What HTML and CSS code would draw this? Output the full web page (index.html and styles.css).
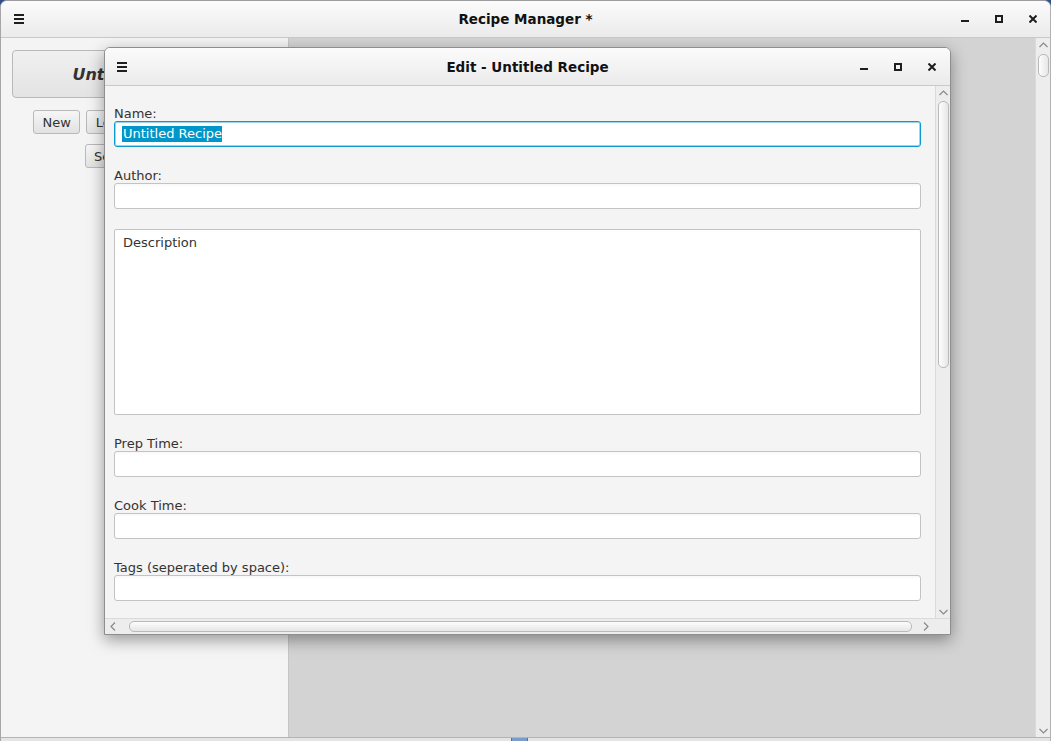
FILE: index.html
```html
<!DOCTYPE html>
<html>
<head>
<meta charset="utf-8">
<title>Recipe Manager</title>
<link rel="stylesheet" href="styles.css">
</head>
<body>
<div class="app">
  <header class="titlebar main-titlebar">
    <div class="tb-left">
      <svg class="hamburger" width="10" height="10" viewBox="0 0 10 10"><rect x="0" y="0" width="10" height="2"/><rect x="0" y="4" width="10" height="2"/><rect x="0" y="8" width="10" height="2"/></svg>
    </div>
    <div class="tb-title">Recipe Manager *</div>
    <div class="tb-controls">
      <span class="ctl"><svg width="8" height="8" viewBox="0 0 8 8"><rect x="0" y="5" width="8" height="2"/></svg></span>
      <span class="ctl"><svg width="8" height="8" viewBox="0 0 8 8"><rect x="1" y="1" width="6" height="6" fill="none" stroke="#1e1e1e" stroke-width="2"/></svg></span>
      <span class="ctl"><svg width="8" height="8" viewBox="0 0 8 8"><path d="M0.5 0.5 L7.5 7.5 M7.5 0.5 L0.5 7.5" stroke="#1e1e1e" stroke-width="2" fill="none"/></svg></span>
    </div>
  </header>

  <div class="main-body">
    <aside class="sidebar">
      <div class="recipe-btn">Untitled Recipe</div>
      <div class="btn-row">
        <div class="btn">New</div>
        <div class="btn">Load</div>
        <div class="btn">Save</div>
        <div class="btn">Delete</div>
      </div>
      <div class="btn-row">
        <div class="btn">Search</div>
        <div class="btn">Filter</div>
      </div>
    </aside>
    <main class="workspace"></main>
    <div class="vscroll main-vscroll">
      <svg class="arrow" width="9" height="6" viewBox="0 0 9 6"><polyline points="0.5,5 4.5,1 8.5,5" fill="none" stroke="#8a8a8a" stroke-width="1.2"/></svg>
      <div class="vthumb main-thumb"></div>
      <div class="vfill"></div>
      <svg class="arrow" width="9" height="6" viewBox="0 0 9 6"><polyline points="0.5,1 4.5,5 8.5,1" fill="none" stroke="#8a8a8a" stroke-width="1.2"/></svg>
    </div>
  </div>

  <div class="bottom-edge"><div class="task-item"></div></div>

  <section class="dialog">
    <header class="titlebar dialog-titlebar">
      <div class="tb-left">
        <svg class="hamburger" width="10" height="10" viewBox="0 0 10 10"><rect x="0" y="0" width="10" height="2"/><rect x="0" y="4" width="10" height="2"/><rect x="0" y="8" width="10" height="2"/></svg>
      </div>
      <div class="tb-title">Edit - Untitled Recipe</div>
      <div class="tb-controls">
        <span class="ctl"><svg width="8" height="8" viewBox="0 0 8 8"><rect x="0" y="5" width="8" height="2"/></svg></span>
        <span class="ctl"><svg width="8" height="8" viewBox="0 0 8 8"><rect x="1" y="1" width="6" height="6" fill="none" stroke="#1e1e1e" stroke-width="2"/></svg></span>
        <span class="ctl"><svg width="8" height="8" viewBox="0 0 8 8"><path d="M0.5 0.5 L7.5 7.5 M7.5 0.5 L0.5 7.5" stroke="#1e1e1e" stroke-width="2" fill="none"/></svg></span>
      </div>
    </header>

    <div class="dialog-scroll">
      <div class="form">
        <div class="field">
          <div class="label">Name:</div>
          <div class="textfield focused"><span class="selection">Untitled Recipe</span></div>
        </div>
        <div class="field">
          <div class="label">Author:</div>
          <div class="textfield"></div>
        </div>
        <div class="field">
          <div class="textarea">Description</div>
        </div>
        <div class="field">
          <div class="label">Prep Time:</div>
          <div class="textfield"></div>
        </div>
        <div class="field">
          <div class="label">Cook Time:</div>
          <div class="textfield"></div>
        </div>
        <div class="field">
          <div class="label">Tags (seperated by space):</div>
          <div class="textfield"></div>
        </div>
      </div>
      <div class="vscroll dialog-vscroll">
        <svg class="arrow" width="9" height="6" viewBox="0 0 9 6"><polyline points="0.5,5 4.5,1 8.5,5" fill="none" stroke="#8a8a8a" stroke-width="1.2"/></svg>
        <div class="vthumb dialog-thumb"></div>
        <div class="vfill"></div>
        <svg class="arrow" width="9" height="6" viewBox="0 0 9 6"><polyline points="0.5,1 4.5,5 8.5,1" fill="none" stroke="#8a8a8a" stroke-width="1.2"/></svg>
      </div>
    </div>

    <div class="hscroll-row">
      <div class="hscroll">
        <svg class="harrow" width="6" height="9" viewBox="0 0 6 9"><polyline points="5,0.5 1,4.5 5,8.5" fill="none" stroke="#8a8a8a" stroke-width="1.2"/></svg>
        <div class="hthumb"></div>
        <svg class="harrow" width="6" height="9" viewBox="0 0 6 9"><polyline points="1,0.5 5,4.5 1,8.5" fill="none" stroke="#8a8a8a" stroke-width="1.2"/></svg>
      </div>
      <div class="corner"></div>
    </div>
  </section>
</div>
</body>
</html>
```

FILE: styles.css
```css
* { box-sizing: border-box; }

html, body {
  margin: 0;
  padding: 0;
  width: 1051px;
  height: 741px;
  overflow: hidden;
  background: #2c4f86;
  font-family: "DejaVu Sans", "Liberation Sans", sans-serif;
  font-size: 13px;
  color: #333333;
}

.app {
  position: relative;
  width: 1051px;
  height: 741px;
  display: flex;
  flex-direction: column;
  background: #f4f4f4;
  border-top: 1px solid #9c9c9c;
  border-left: 1px solid #a6a6a6;
  border-right: 1px solid #b2b2b2;
  border-radius: 7px 7px 0 0;
  overflow: hidden;
}

/* ---------- title bars ---------- */
.titlebar {
  display: grid;
  grid-template-columns: 1fr auto 1fr;
  align-items: center;
  background: linear-gradient(#fbfbfb, #ebebeb);
  border-bottom: 1px solid #c9c9c9;
  flex: none;
}

.main-titlebar { height: 37px; }

.tb-left {
  display: flex;
  align-items: center;
}

.main-titlebar .tb-left { padding-left: 13px; }

.hamburger { display: block; fill: #1e1e1e; }

.tb-title {
  font-weight: bold;
  font-size: 13.5px;
  color: #111111;
  white-space: nowrap;
}

.tb-controls {
  display: flex;
  justify-content: flex-end;
}

.ctl {
  width: 34px;
  height: 20px;
  display: flex;
  align-items: center;
  justify-content: center;
}

.ctl svg { display: block; fill: #1e1e1e; }

/* ---------- main window body ---------- */
.main-body {
  flex: 1;
  display: flex;
  min-height: 0;
}

.sidebar {
  width: 288px;
  flex: none;
  background: #f4f4f4;
  border-right: 1px solid #c6c6c6;
  padding: 12px 12px 0 11px;
  display: flex;
  flex-direction: column;
}

.recipe-btn {
  height: 48px;
  border: 1px solid #b9b9b9;
  border-radius: 4px;
  background: linear-gradient(#f0f0f0, #e3e3e3);
  display: flex;
  align-items: center;
  justify-content: center;
  padding-right: 5px;
  font-weight: bold;
  font-style: italic;
  font-size: 16px;
  color: #333333;
}

.btn-row {
  display: flex;
  justify-content: center;
  gap: 6px;
  margin-top: 12px;
  padding-left: 6px;
}

.btn-row + .btn-row { margin-top: 10px; padding-left: 2px; }

.btn {
  height: 24px;
  padding: 0 8.5px;
  border: 1px solid #b9b9b9;
  border-radius: 3px;
  background: linear-gradient(#f6f6f6, #e2e2e2);
  display: flex;
  align-items: center;
  color: #333333;
}

.workspace {
  flex: 1;
  background: #d3d3d3;
}

/* ---------- scrollbars ---------- */
.vscroll {
  width: 15px;
  flex: none;
  background: #ededed;
  border-left: 1px solid #dadada;
  display: flex;
  flex-direction: column;
  align-items: center;
}

.arrow { display: block; flex: none; }

.main-vscroll { padding: 4px 0 3px; }
.main-vscroll .arrow:first-child { margin-bottom: 6px; }

.vthumb {
  width: 11px;
  border: 1px solid #b9b9b9;
  border-radius: 5px;
  background: linear-gradient(90deg, #fdfdfd, #e6e6e6);
  flex: none;
}

.main-thumb { height: 23px; }

.vfill { flex: 1; }

.bottom-edge {
  height: 4px;
  flex: none;
  border-top: 1px solid #b3b3b3;
  background: #e4e4e4;
  display: flex;
}

.task-item {
  margin-left: 510px;
  width: 17px;
  height: 3px;
  background: #7c9ccf;
  border-left: 1px solid #5d6f8a;
  border-right: 1px solid #5d6f8a;
}

/* ---------- dialog ---------- */
.dialog {
  position: absolute;
  left: 103px;
  top: 46px;
  width: 847px;
  height: 588px;
  background: #f4f4f4;
  border: 1px solid #8e8e8e;
  border-radius: 6px 6px 0 0;
  box-shadow: 0 5px 16px rgba(0, 0, 0, 0.38);
  display: flex;
  flex-direction: column;
  overflow: hidden;
}

.dialog-titlebar { height: 38px; }
.dialog-titlebar .tb-left { padding-left: 12px; }
.dialog-titlebar .tb-controls { padding-right: 1px; }

.dialog-scroll {
  flex: 1;
  display: flex;
  min-height: 0;
}

.form {
  flex: 1;
  padding: 19px 14px 0 9px;
  overflow: hidden;
}

.field { margin-bottom: 20px; }

.label {
  height: 16px;
  line-height: 18px;
  color: #333333;
  white-space: nowrap;
}

.textfield {
  height: 26px;
  border: 1px solid #c3c3c3;
  border-radius: 3px;
  background: linear-gradient(#f7f7f7 0px, #ffffff 3px);
  display: flex;
  align-items: center;
  padding-left: 7px;
}

.textfield.focused {
  border-color: #0a9ad0;
  box-shadow: inset 0 0 0 1px #9fd4ea;
  background: #ffffff;
}

.selection {
  background: #0096c9;
  color: #ffffff;
  line-height: 16px;
  padding: 0 0 0 1px;
}

.textarea {
  height: 186px;
  border: 1px solid #c3c3c3;
  border-radius: 2px;
  background: #ffffff;
  padding: 5px 8px;
  line-height: 16px;
  color: #333333;
}

.dialog-vscroll { padding: 4px 0 3px; }
.dialog-vscroll .arrow:first-child { margin-bottom: 5px; }
.dialog-thumb { height: 267px; }

.hscroll-row {
  height: 16px;
  flex: none;
  display: flex;
  border-top: 1px solid #dadada;
  background: #ededed;
}

.hscroll {
  flex: 1;
  display: flex;
  align-items: center;
  padding: 0 6px 0 5px;
}

.harrow { display: block; flex: none; }

.hthumb {
  flex: 1;
  height: 11px;
  margin: 0 11px 0 13px;
  border: 1px solid #b9b9b9;
  border-radius: 5px;
  background: linear-gradient(#fdfdfd, #e6e6e6);
}

.corner {
  width: 15px;
  flex: none;
  background: #ededed;
}
```
